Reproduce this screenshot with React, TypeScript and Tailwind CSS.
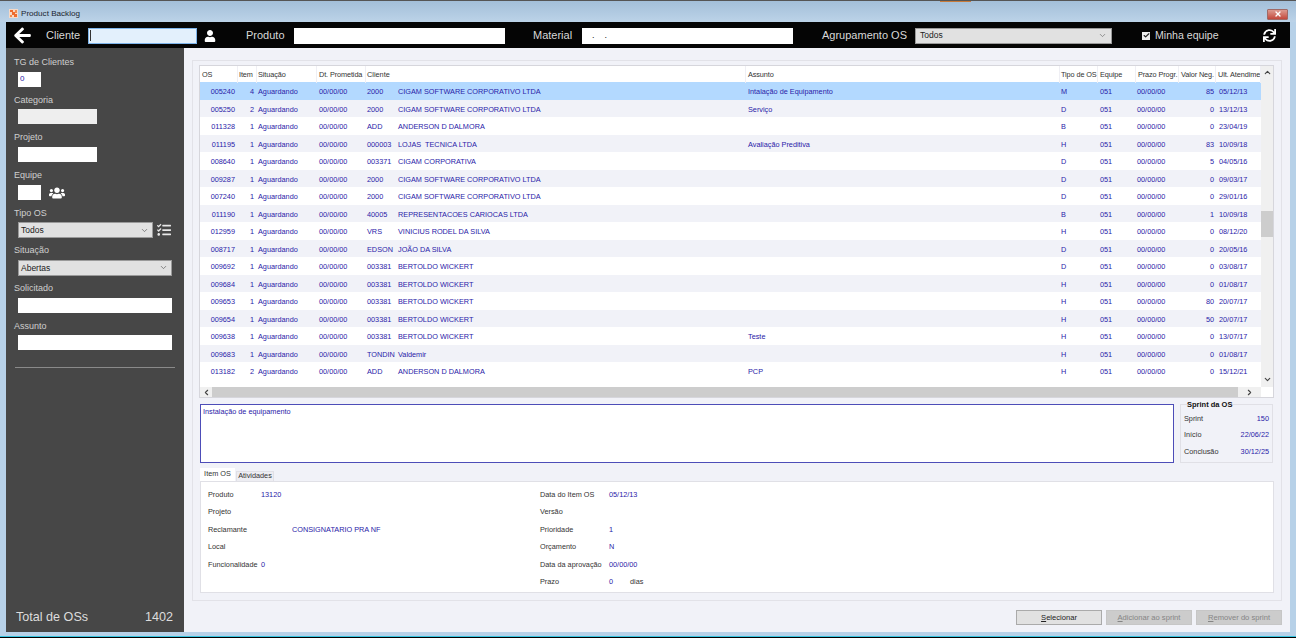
import React from "react";
import { FaArrowLeft, FaUser, FaUsers, FaSync, FaTasks } from "react-icons/fa";
import { ChevronDown, ChevronUp, ChevronLeft, ChevronRight, X, Check } from "lucide-react";

type Row = [string, string, string, string, string, string, string, string];

const C = "CIGAM SOFTWARE CORPORATIVO LTDA";
const B = "BERTOLDO WICKERT";
const rows: Row[] = [
  ["005240", "4", "2000", C, "Intalação de Equipamento", "M", "85", "05/12/13"],
  ["005250", "2", "2000", C, "Serviço", "D", "0", "13/12/13"],
  ["011328", "1", "ADD", "ANDERSON D DALMORA", "", "B", "0", "23/04/19"],
  ["011195", "1", "000003", "LOJAS  TECNICA LTDA", "Avaliação Preditiva", "H", "83", "10/09/18"],
  ["008640", "1", "003371", "CIGAM CORPORATIVA", "", "D", "5", "04/05/16"],
  ["009287", "1", "2000", C, "", "D", "0", "09/03/17"],
  ["007240", "1", "2000", C, "", "D", "0", "29/01/16"],
  ["011190", "1", "40005", "REPRESENTACOES CARIOCAS LTDA", "", "B", "1", "10/09/18"],
  ["012959", "1", "VRS", "VINICIUS RODEL DA SILVA", "", "H", "0", "08/12/20"],
  ["008717", "1", "EDSON", "JOÃO DA SILVA", "", "D", "0", "20/05/16"],
  ["009692", "1", "003381", B, "", "D", "0", "03/08/17"],
  ["009684", "1", "003381", B, "", "H", "0", "01/08/17"],
  ["009653", "1", "003381", B, "", "H", "80", "20/07/17"],
  ["009654", "1", "003381", B, "", "H", "50", "20/07/17"],
  ["009638", "1", "003381", B, "Teste", "H", "0", "13/07/17"],
  ["009683", "1", "TONDIN", "Valdemir", "", "H", "0", "01/08/17"],
  ["013182", "2", "ADD", "ANDERSON D DALMORA", "PCP", "H", "0", "15/12/21"],
];

const cols = "grid grid-cols-[38px_19px_60px_49px_32px_348px_314px_38px_38px_43px_37px_45px]";

function Field({ label, children }: { label: string; children: React.ReactNode }) {
  return (
    <div className="h-[37.7px] shrink-0">
      <div className="h-4 pl-[8px] text-[9px] leading-4 text-[#cfcfcf]">{label}</div>
      <div className="mt-[1.5px] flex h-[15px] items-start pl-[12px]">{children}</div>
    </div>
  );
}

function Sel({ w, text }: { w: string; text: string }) {
  return (
    <div className={`flex h-[16px] items-center justify-between border border-[#9a9a9a] bg-[#e1e1e1] pl-[2px] pr-[3px] text-[8.5px] text-[#222] ${w}`}>
      <span>{text}</span>
      <ChevronDown size={9} className="text-[#666]" />
    </div>
  );
}

function Hd({ t, tight }: { t: string; tight?: boolean }) {
  return (
    <div className={`overflow-hidden whitespace-nowrap border-r border-[#efeff4] tracking-[-0.1px] leading-[17px] ${tight ? "pl-[1px]" : "pl-[2px]"}`}>{t}</div>
  );
}

function TableRow({ r, i }: { r: Row; i: number }) {
  const bg = i === 0 ? "bg-[#b3d9ff]" : i % 2 === 1 ? "bg-[#f1f2f8]" : "bg-white";
  return (
    <div className={`${cols} h-[17.5px] shrink-0 leading-[19.5px] text-[#2a22a8] ${bg}`}>
      <div className="pr-[3px] text-right">{r[0]}</div>
      <div className="pr-[3px] text-right">{r[1]}</div>
      <div className="pl-[1px]">Aguardando</div>
      <div className="pl-[2px]">00/00/00</div>
      <div className="pl-[1px]">{r[2]}</div>
      <div className="whitespace-pre">{r[3]}</div>
      <div className="pl-[2px]">{r[4]}</div>
      <div className="pl-[1px]">{r[5]}</div>
      <div className="pl-[2px]">051</div>
      <div className="pl-[1px]">00/00/00</div>
      <div className="pr-[2px] text-right">{r[6]}</div>
      <div className="pl-[3px]">{r[7]}</div>
    </div>
  );
}

function Detail({ l, v, w, extra }: { l: string; v?: string; w: string; extra?: string }) {
  return (
    <div className="flex h-[17.5px] items-center">
      <span className={`whitespace-nowrap text-[#333] ${w}`}>{l}</span>
      <span className="text-[#2a22a8]">{v}</span>
      {extra && <span className="ml-[17px] text-[#333]">{extra}</span>}
    </div>
  );
}

function Btn({ k, rest, on }: { k: string; rest: string; on?: boolean }) {
  return (
    <div className={`flex h-[15px] w-[86px] items-center justify-center border text-[7.6px] ${on ? "border-[#aaaaaa] bg-[#e1e1e1] text-[#222]" : "border-[#c6c6c6] bg-[#cccccc] text-[#858585]"}`}>
      <span className="underline">{k}</span>{rest}
    </div>
  );
}

export default function App() {
  return (
    <div className="relative flex h-[638px] w-[1296px] flex-col overflow-hidden border-t border-[#555] bg-[#b7d1e8] font-['Liberation_Sans',sans-serif] text-[7.3px]">
      <div className="absolute left-[940px] top-[-1px] h-[2px] w-[31px] bg-[#c87a3a]" />
      {/* title bar */}
      <div className="flex h-[21px] shrink-0 items-center justify-between bg-gradient-to-b from-[#a3bfd9] to-[#bcd3e8] pl-[9px] pr-[8px]">
        <div className="flex items-center gap-[3px] pt-[5px]">
          <svg width="9" height="9" viewBox="0 0 9 9">
            <rect width="9" height="9" fill="#f6d9c6" />
            <path d="M1 1h3v2H1zM5 5h3v3H5zM3 3h3v3H3z" fill="#ee6a2c" />
            <path d="M6 1h2v3H6zM1 6h2v2H1z" fill="#f08a50" />
          </svg>
          <span className="text-[8.1px] text-[#1c2530]">Product Backlog</span>
        </div>
        <div className="mt-[5px] flex h-[11px] w-[21px] items-center justify-center rounded-[1px] border border-[#a06a66] bg-gradient-to-b from-[#dc9a90] to-[#c2473c]">
          <X size={8} strokeWidth={4} className="text-white" />
        </div>
      </div>

      <div className="flex min-h-0 flex-1 flex-col pl-[6px] pr-[6px]">
        {/* toolbar */}
        <div className="flex h-[26px] shrink-0 items-center bg-[#050505] pt-px text-[11px] text-[#d8d8d8]">
          <FaArrowLeft size={19} className="ml-[7px] text-white" />
          <span className="ml-[14px] w-[42px]">Cliente</span>
          <div className="flex h-[16px] w-[109px] items-center border border-[#7eb4ea] bg-[#e3f0fc] pl-[1px]">
            <div className="h-[11px] w-px bg-[#333]" />
          </div>
          <FaUser size={12} className="ml-[7px] text-white" />
          <span className="ml-[30px] w-[48px]">Produto</span>
          <div className="h-[16px] w-[211px] bg-white" />
          <span className="ml-[28px] w-[49px]">Material</span>
          <div className="flex h-[16px] w-[211px] items-center gap-[10px] bg-white pl-[10px] text-[9px] leading-none text-[#222]">
            <span>.</span>
            <span>.</span>
          </div>
          <span className="ml-[29px] w-[92px]">Agrupamento OS</span>
          <div className="ml-px flex h-[16px] w-[197px] items-center justify-between border border-[#9a9a9a] bg-[#e1e1e1] pl-[4px] pr-[4px] text-[8.5px] text-[#222]">
            <span>Todos</span>
            <ChevronDown size={9} className="text-[#777]" />
          </div>
          <div className="ml-[30px] flex h-[8px] w-[8px] items-center justify-center bg-[#eeeeee]">
            <Check size={7} strokeWidth={4} className="text-[#222]" />
          </div>
          <span className="ml-[5px] w-[108px] text-[10.6px]">Minha equipe</span>
          <FaSync size={13} className="text-white" />
        </div>

        <div className="flex min-h-0 flex-1">
          {/* sidebar */}
          <div className="flex h-[584px] w-[178px] shrink-0 flex-col bg-[#474747] pt-[6px]">
            <Field label="TG de Clientes">
              <div className="flex h-[15px] w-[23px] items-center bg-white pl-[2px] text-[8px] text-[#2a22a8]">0</div>
            </Field>
            <Field label="Categoria">
              <div className="h-[15px] w-[79px] bg-[#eeeeee]" />
            </Field>
            <Field label="Projeto">
              <div className="h-[15px] w-[79px] bg-white" />
            </Field>
            <Field label="Equipe">
              <div className="h-[15px] w-[23px] bg-white" />
              <FaUsers size={16} className="ml-[8px] text-white" />
            </Field>
            <Field label="Tipo OS">
              <Sel w="w-[135px]" text="Todos" />
              <FaTasks size={14} className="ml-[4px] mt-px text-[#e8e8e8]" />
            </Field>
            <Field label="Situação">
              <Sel w="w-[154px]" text="Abertas" />
            </Field>
            <Field label="Solicitado">
              <div className="h-[15px] w-[154px] bg-white" />
            </Field>
            <Field label="Assunto">
              <div className="h-[15px] w-[154px] bg-white" />
            </Field>
            <div className="ml-[9px] mt-[11px] h-px w-[160px] border-t border-[#8a8a8a]" />
            <div className="mt-auto flex justify-between pb-[6px] pl-[10px] pr-[11px] text-[12.6px] leading-[18px] text-[#dddddd]">
              <span>Total de OSs</span>
              <span>1402</span>
            </div>
          </div>

          {/* main */}
          <div className="flex h-[584px] min-w-0 flex-1 flex-col bg-[#f1f2f8] pl-[8px] pr-[8px] pt-[12px]">
            <div className="flex h-[541px] shrink-0 flex-col border border-[#e2e2e8] pb-[7px] pl-[6px] pr-[7px] pt-[4px]">
              {/* grid */}
              <div className="flex h-[333px] shrink-0 flex-col border border-[#d6d6dc] bg-white">
                <div className="flex h-[321px] shrink-0">
                  <div className="h-full w-[1061px] shrink-0 overflow-hidden">
                    <div className={`${cols} h-[16px] text-[#333]`}>
                      <Hd t="OS" />
                      <Hd t="Item" tight />
                      <Hd t="Situação" tight />
                      <Hd t="Dt. Prometida" />
                      <div className="col-span-2 border-r border-[#efeff4] pl-[1px] leading-[17px]">Cliente</div>
                      <Hd t="Assunto" />
                      <Hd t="Tipo de OS" tight />
                      <Hd t="Equipe" />
                      <Hd t="Prazo Progr." />
                      <Hd t="Valor Neg." />
                      <Hd t="Ult. Atendimento" />
                    </div>
                    {rows.map((r, i) => (
                      <TableRow key={i} r={r} i={i} />
                    ))}
                  </div>
                  <div className="flex w-[12px] shrink-0 flex-col items-center bg-[#f0f0f0]">
                    <ChevronUp size={9} strokeWidth={3} className="mt-[2px] shrink-0 text-[#444]" />
                    <div className="mt-[134px] h-[26px] w-full shrink-0 bg-[#cdcdcd]" />
                    <ChevronDown size={9} strokeWidth={3} className="mb-[3px] mt-auto shrink-0 text-[#444]" />
                  </div>
                </div>
                <div className="flex h-[10px] shrink-0 pr-[12px]">
                  <div className="flex w-[12px] items-center justify-center bg-[#f0f0f0]">
                    <ChevronLeft size={9} strokeWidth={3} className="text-[#444]" />
                  </div>
                  <div className="flex-1 bg-[#cdcdcd]" />
                  <div className="flex w-[23px] items-center justify-center bg-[#f0f0f0]">
                    <ChevronRight size={9} strokeWidth={3} className="text-[#444]" />
                  </div>
                </div>
              </div>

              {/* memo + sprint */}
              <div className="ml-px mt-[6px] flex h-[59px] shrink-0 gap-[6px]">
                <div className="w-[974px] border border-[#4d4db8] bg-white pl-[2px] pt-[2px] text-[#2a22a8]">
                  Instalação de equipamento
                </div>
                <div className="relative flex w-[93px] flex-col border border-[#e0e0e6] px-[3px] pt-[6.5px] text-[#333]">
                  <span className="absolute left-[6px] top-[-4px] bg-[#f1f2f8] text-[7.5px] font-bold leading-[8px] text-[#111]">Sprint da OS</span>
                  <div className="flex h-[16.2px] items-center justify-between">
                    <span>Sprint</span>
                    <span className="text-[#2a22a8]">150</span>
                  </div>
                  <div className="flex h-[16.2px] items-center justify-between">
                    <span>Início</span>
                    <span className="text-[#2a22a8]">22/06/22</span>
                  </div>
                  <div className="flex h-[16.2px] items-center justify-between">
                    <span>Conclusão</span>
                    <span className="text-[#2a22a8]">30/12/25</span>
                  </div>
                </div>
              </div>

              {/* tabs */}
              <div className="ml-px mt-[5px] flex h-[13px] shrink-0 items-end text-[#333]">
                <div className="flex h-[13px] w-[35px] items-center justify-center bg-white">Item OS</div>
                <div className="ml-px flex h-[10px] w-[38px] items-center justify-center border border-b-0 border-[#e0e0e6] bg-[#ededf2]">Atividades</div>
              </div>
              <div className="ml-px flex h-[112px] w-[1074px] shrink-0 border border-[#e0e0e6] bg-white pl-[7px] pt-[4.5px]">
                <div className="w-[332px]">
                  <Detail l="Produto" v="13120" w="w-[53px]" />
                  <Detail l="Projeto" w="w-[53px]" />
                  <Detail l="Reclamante" v="CONSIGNATARIO PRA NF" w="w-[84px]" />
                  <Detail l="Local" w="w-[53px]" />
                  <Detail l="Funcionalidade" v="0" w="w-[53px]" />
                </div>
                <div>
                  <Detail l="Data do Item OS" v="05/12/13" w="w-[69px]" />
                  <Detail l="Versão" w="w-[69px]" />
                  <Detail l="Prioridade" v="1" w="w-[69px]" />
                  <Detail l="Orçamento" v="N" w="w-[69px]" />
                  <Detail l="Data da aprovação" v="00/00/00" w="w-[69px]" />
                  <Detail l="Prazo" v="0" w="w-[69px]" extra="dias" />
                </div>
              </div>
            </div>

            {/* buttons */}
            <div className="mt-[9px] flex justify-end gap-[4px]">
              <Btn k="S" rest="elecionar" on />
              <Btn k="A" rest="dicionar ao sprint" />
              <Btn k="R" rest="emover do sprint" />
            </div>
          </div>
        </div>
      </div>
      <div className="h-[4px] shrink-0 bg-[#b7d1e8]" />
      <div className="h-[2px] shrink-0 border-b border-black bg-[#35c4e0]" />
    </div>
  );
}
